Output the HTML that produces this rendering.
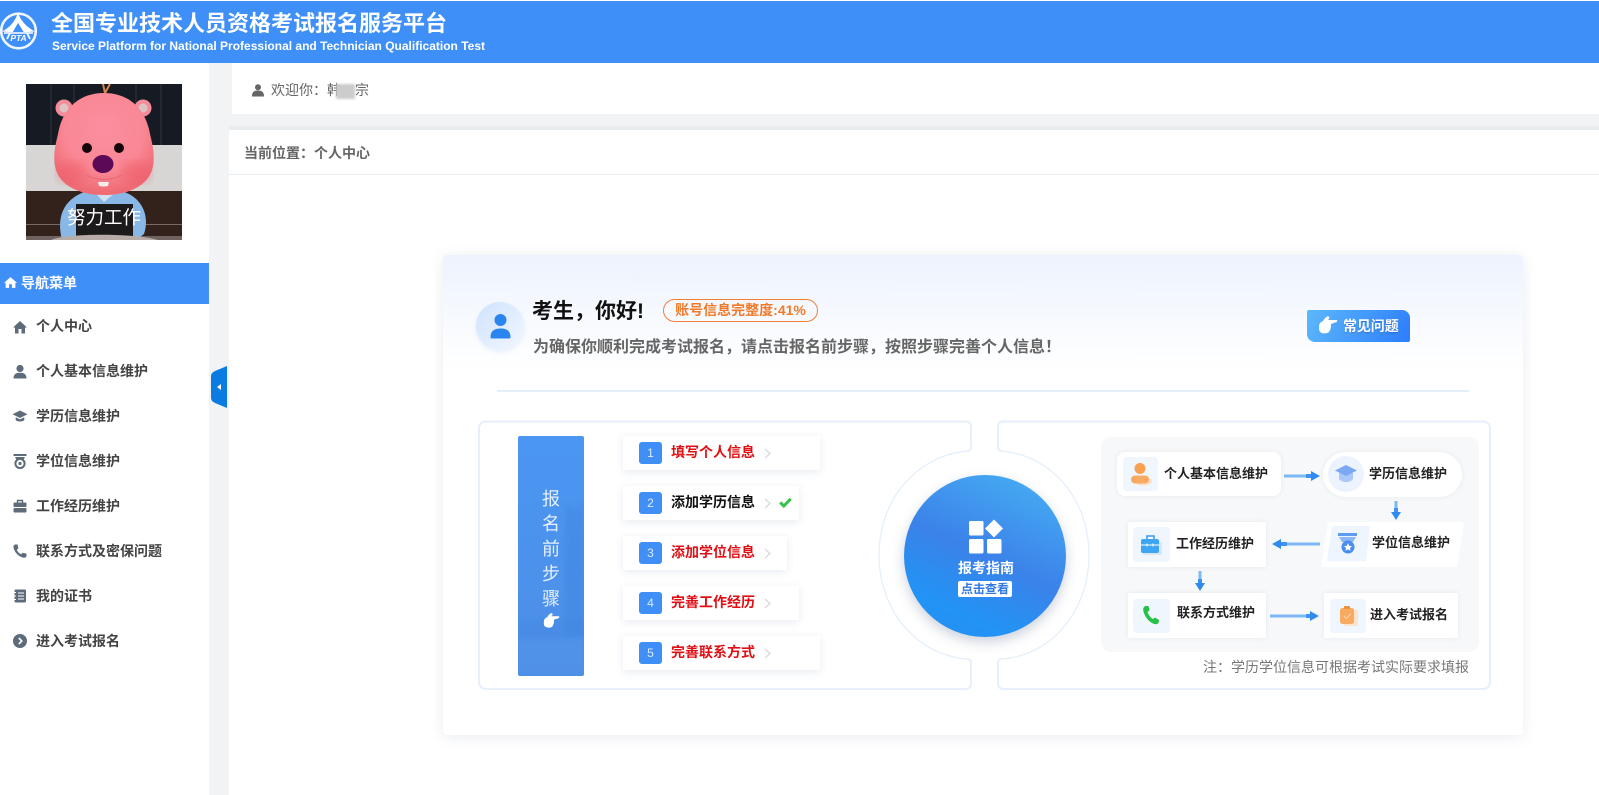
<!DOCTYPE html>
<html lang="zh"><head><meta charset="utf-8"><title>全国专业技术人员资格考试报名服务平台</title>
<style>
*{box-sizing:border-box}
html,body{margin:0;padding:0;width:1599px;height:795px;overflow:hidden;background:#fff;font-family:"Liberation Sans","Noto Sans CJK SC",sans-serif}
.a{position:absolute;white-space:nowrap}
.nav{position:absolute;left:36px;font-size:14px;font-weight:700;color:#444;line-height:20px;white-space:nowrap}
.ni{position:absolute;left:12px;width:16px;height:16px}
.step{position:absolute;left:623px;height:34px;background:#fff;box-shadow:0 2px 8px rgba(60,90,140,.12)}
.num{position:absolute;left:16px;top:6px;width:23px;height:22px;background:#3f8ff6;border-radius:3px;color:#dcebff;font-size:12px;text-align:center;line-height:22px}
.st{position:absolute;left:48px;top:0;line-height:33px;font-size:14px;font-weight:700;color:#e00f14;white-space:nowrap}
.chev{position:absolute;left:141px;top:12px;width:7px;height:11px}
.box{position:absolute;background:#fff;box-shadow:0 0 5px rgba(80,100,130,.1)}
.ib{position:absolute;background:#f0f6fe;border-radius:4px}
.bt{position:absolute;font-size:13px;font-weight:700;color:#222;line-height:18px;white-space:nowrap}
</style></head><body>
<div class="a" style="left:0;top:1px;width:1599px;height:62px;background:#3f8ff8"></div>
<svg class="a" style="left:0;top:8px" width="42" height="46" viewBox="0 0 42 46">
<circle cx="18.5" cy="23" r="17.3" fill="none" stroke="#fff" stroke-width="2.6" opacity=".92"/>
<path d="M18 4 C16.5 11 11 19 2 23.5 L9 24 L14 24 L18 15 L22.5 24 L28 24 L35 23.5 C26 19 19.5 11 18 4Z" fill="#fff"/>
<path d="M18 15 L12.5 24.5 H24 Z" fill="#3f8ff8"/>
<path d="M4 25 H33" stroke="#fff" stroke-width="1.6"/>
<path d="M10 25 L7 31 M27 25 L30 31" stroke="#fff" stroke-width="1.8"/>
<text x="18.5" y="33" font-family="Liberation Sans" font-size="8.5" font-style="italic" font-weight="700" fill="#fff" text-anchor="middle">PTA</text>
</svg>
<div class="a" style="left:51px;top:9px;font-size:22px;font-weight:700;color:#fff;line-height:30px">全国专业技术人员资格考试报名服务平台</div>
<div class="a" style="left:52px;top:39px;font-size:12px;font-weight:700;color:#fff;line-height:15px">Service Platform for National Professional and Technician Qualification Test</div>

<div class="a" style="left:209px;top:63px;width:20px;height:732px;background:#f2f3f5"></div>
<div class="a" style="left:229px;top:114px;width:1370px;height:12px;background:#f2f3f5"></div>
<div class="a" style="left:229px;top:63px;width:3px;height:51px;background:#f2f3f5"></div>
<div class="a" style="left:229px;top:126px;width:1370px;height:4px;background:#e8ecef"></div>
<div class="a" style="left:229px;top:174px;width:1370px;height:1px;background:#e8edf2"></div>

<svg class="a" style="left:252px;top:84px" width="12" height="13" viewBox="0 0 12 13"><circle cx="6" cy="3.3" r="3" fill="#666"/><path d="M0 12.5 C0 8 2 6.5 6 6.5 C10 6.5 12 8 12 12.5Z" fill="#666"/></svg>
<div class="a" style="left:271px;top:80px;font-size:14px;color:#666;line-height:20px">欢迎你：<span style="position:relative">韩<span style="display:inline-block;width:14px"></span>宗<i style="position:absolute;left:9px;top:2px;width:19px;height:15px;background:#ccc;filter:blur(1px)"></i></span></div>
<div class="a" style="left:244px;top:143px;font-size:14px;font-weight:700;color:#666;line-height:20px">当前位置：个人中心</div>

<!-- avatar -->
<svg class="a" style="left:26px;top:84px" width="156" height="156" viewBox="0 0 156 156">
<defs><radialGradient id="face" cx=".5" cy=".36" r=".62"><stop offset="0" stop-color="#fb8e9f"/><stop offset=".65" stop-color="#fa8794"/><stop offset="1" stop-color="#ee6b74"/></radialGradient><filter id="bl"><feGaussianBlur stdDeviation="5"/></filter></defs>
<rect width="156" height="61" fill="#161a22"/><path d="M25 0V61M48 0V61M110 0V61M135 0V61" stroke="#23272f" stroke-width="2"/><rect y="61" width="156" height="46" fill="#d8d5d5"/><rect y="107" width="156" height="49" fill="#33211c"/><rect y="140" width="156" height="1" fill="#7a6a66"/><rect y="152" width="156" height="4" fill="#6f6360"/>
<path d="M77 0 L79 9 M84 0 L79 9" stroke="#d5854e" stroke-width="2"/>
<path d="M36 156 C30 132 38 116 58 108 L98 108 C116 114 124 132 118 150 L110 156Z" fill="#8ab8e6"/>
<path d="M68 108 L78 118 L90 108Z" fill="#cfe0f2"/>
<rect x="50" y="120" width="57" height="33" fill="#1c1a1b"/><path d="M25 156 C40 149 110 149 132 156Z" fill="#b8aca8"/>
<circle cx="38" cy="24" r="8.5" fill="#f58c9b"/><circle cx="38" cy="24" r="4.5" fill="#dcc4c4"/><circle cx="117" cy="24" r="8.5" fill="#f58c9b"/><circle cx="117" cy="24" r="4.5" fill="#dcc4c4"/>
<path d="M78 9 C52 9 36 26 32 50 C28 66 27 76 30 86 C35 102 54 111 78 111 C102 111 121 102 126 86 C129 76 128 66 124 50 C120 26 104 9 78 9Z" fill="url(#face)"/>
<ellipse cx="46" cy="88" rx="15" ry="11" fill="#ee5a68" opacity=".45" filter="url(#bl)"/><ellipse cx="110" cy="88" rx="15" ry="11" fill="#ee5a68" opacity=".45" filter="url(#bl)"/>
<circle cx="61" cy="64" r="5" fill="#16060a"/><circle cx="93" cy="64" r="5" fill="#16060a"/>
<ellipse cx="77" cy="80" rx="10.5" ry="9" fill="#5c0a58"/>
<path d="M60 91 Q78 100 96 91" fill="none" stroke="#e86a74" stroke-width="1"/>
<path d="M72 98 H83 L82 102 Q78 103 73 102Z" fill="#f2ede8"/>
<text x="78" y="140" font-size="18.5" fill="#fff" text-anchor="middle" font-family="Liberation Sans,Noto Sans CJK SC,sans-serif">努力工作</text>
</svg>

<!-- nav -->
<div class="a" style="left:0;top:263px;width:209px;height:41px;background:#3f8ff8"></div>
<svg class="a" style="left:4px;top:276px" width="13" height="13" viewBox="0 0 12 12"><path d="M6 1 L12 6.3 L10.5 6.3 V11 H7.3 V7.6 H4.7 V11 H1.5 V6.3 H0Z" fill="#fff"/></svg>
<div class="a" style="left:21px;top:273px;font-size:14px;font-weight:700;color:#fff;line-height:20px">导航菜单</div>

<svg class="ni" style="top:319px" viewBox="0 0 16 16"><path d="M8 2 L15 8.5 H13 V14.5 H9.5 V10 H6.5 V14.5 H3 V8.5 H1Z" fill="#5e6b7a"/></svg>
<div class="nav" style="top:316px">个人中心</div>
<svg class="ni" style="top:364px" viewBox="0 0 16 16"><circle cx="8" cy="4.5" r="3.6" fill="#5e6b7a"/><path d="M1.5 14.5 C1.5 10 4 8.7 8 8.7 C12 8.7 14.5 10 14.5 14.5Z" fill="#5e6b7a"/></svg>
<div class="nav" style="top:361px">个人基本信息维护</div>
<svg class="ni" style="top:408px" viewBox="0 0 16 16"><path d="M8 2.5 L15.5 6.3 L8 10 L.5 6.3Z" fill="#5e6b7a"/><path d="M3.7 9.3 L8 11.4 L12.3 9.3 V12 C11 14 5 14 3.7 12Z" fill="#5e6b7a"/></svg>
<div class="nav" style="top:406px">学历信息维护</div>
<svg class="ni" style="top:453px" viewBox="0 0 16 16"><rect x="1.5" y="1" width="13" height="2" fill="#5e6b7a"/><path d="M3 4 H13 L11.5 7 H4.5Z" fill="#5e6b7a"/><circle cx="8" cy="10.5" r="4.6" fill="none" stroke="#5e6b7a" stroke-width="2"/><circle cx="8" cy="10.5" r="1.6" fill="#5e6b7a"/></svg>
<div class="nav" style="top:451px">学位信息维护</div>
<svg class="ni" style="top:498px" viewBox="0 0 16 16"><rect x="1.5" y="4.5" width="13" height="4.5" rx="1" fill="#5e6b7a"/><rect x="1.5" y="10" width="13" height="4.5" rx="1" fill="#5e6b7a"/><path d="M5.5 4.5 V2.5 H10.5 V4.5" fill="none" stroke="#5e6b7a" stroke-width="1.4"/></svg>
<div class="nav" style="top:496px">工作经历维护</div>
<svg class="ni" style="top:543px" viewBox="0 0 16 16"><path d="M3 1.5 L5.6 1.5 L6.3 5.5 L4.8 6.7 C5.7 9 7.3 10.4 9.4 11.3 L10.6 9.7 L14.5 10.6 L14.5 13.2 C14 14.5 12.5 15 11 14.6 C6.5 13.5 2.4 9.2 1.5 4.5 C1.3 3 1.9 1.9 3 1.5Z" fill="#5e6b7a"/></svg>
<div class="nav" style="top:541px">联系方式及密保问题</div>
<svg class="ni" style="top:588px" viewBox="0 0 16 16"><rect x="2.5" y="1.5" width="11.5" height="13" rx="1.2" fill="#5e6b7a"/><path d="M1.2 4.5 H4 M1.2 8 H4 M1.2 11.5 H4 M6 5 H12 M6 8 H12 M6 11 H12" stroke="#fff" stroke-width="1"/></svg>
<div class="nav" style="top:586px">我的证书</div>
<svg class="ni" style="top:633px" viewBox="0 0 16 16"><circle cx="8" cy="8" r="7" fill="#5e6b7a"/><path d="M6.8 5 L9.8 8 L6.8 11" fill="none" stroke="#fff" stroke-width="1.6"/></svg>
<div class="nav" style="top:631px">进入考试报名</div>

<svg class="a" style="left:211px;top:366px" width="16" height="42" viewBox="0 0 16 42"><path d="M16 0 V42 L4 37 Q0 35 0 32 V10 Q0 7 4 5Z" fill="#0a7be0"/><path d="M10 18 V24 L6 21Z" fill="#fff"/></svg>

<!-- card -->
<div class="a" style="left:443px;top:255px;width:1080px;height:480px;border-radius:4px;background:linear-gradient(#edf3fd 0,#fff 115px);box-shadow:0 2px 14px rgba(80,100,130,.12)"></div>
<div class="a" style="left:476px;top:302px;width:48px;height:48px;border-radius:50%;background:linear-gradient(135deg,#cfe2fd,#f2f7fe);box-shadow:0 2px 5px rgba(90,140,220,.12)"></div>
<svg class="a" style="left:490px;top:313px" width="21" height="26" viewBox="0 0 21 26"><circle cx="10.5" cy="7" r="6" fill="#2a86ee"/><path d="M.5 24.5 C.5 18 4 15.5 10.5 15.5 C17 15.5 20.5 18 20.5 24.5 Q20.5 25.5 18 25.5 H3 Q.5 25.5 .5 24.5Z" fill="#2a86ee"/></svg>
<div class="a" style="left:532px;top:297px;font-size:21px;font-weight:700;color:#111;line-height:30px">考生，你好!</div>
<div class="a" style="left:663px;top:299px;width:155px;height:23px;border:1px solid #f0813a;border-radius:12px;color:#f07a2a;font-size:14px;font-weight:700;line-height:21px;text-align:center">账号信息完整度:41%</div>
<div class="a" style="left:533px;top:336px;font-size:16px;font-weight:700;color:#666;line-height:24px">为确保你顺利完成考试报名，请点击报名前步骤，按照步骤完善个人信息！</div>
<div class="a" style="left:1307px;top:310px;width:103px;height:32px;border-radius:2px 8px 2px 8px;background:linear-gradient(115deg,#5cb8fb,#2d7dfb)"></div>
<svg class="a" style="left:1318px;top:315px" width="20" height="20" viewBox="0 0 20 20"><path d="M1 12 C1 8 3 7 5 6 C6 4 8 2 10 1 L11.5 2.5 C11 4 10.5 4.5 10 5 L19 5 C19.5 6 19 7 18 7.3 L13 9 C13 12 13 14 11 17 C9 19 3 19 1.5 16 C1 15 1 13 1 12Z" fill="#fff"/></svg>
<div class="a" style="left:1343px;top:316px;font-size:14px;font-weight:700;color:#fff;line-height:20px;text-shadow:0 1px 1px rgba(20,60,140,.4);letter-spacing:-.1px">常见问题</div>
<div class="a" style="left:497px;top:390px;width:972px;height:2px;background:#e3eefb"></div>

<svg class="a" style="left:0;top:0" width="1599" height="795" viewBox="0 0 1599 795">
<path d="M487 421.5 H965 Q971 421.5 971 427 V447 Q971 451 967 451 C916 456 879 500 879 555 C879 610 916 655 967 659 Q971 659 971 663 V683 Q971 689 965 689 H487 Q479 689 479 681 V429 Q479 421.5 487 421.5Z" fill="#fff"/>
<path d="M1004 421.5 H1482 Q1490 421.5 1490 429 V681 Q1490 689 1482 689 H1004 Q998 689 998 683 V663 Q998 659 1002 659 C1053 655 1089 610 1089 555 C1089 500 1053 456 1002 451 Q998 451 998 447 V427 Q998 421.5 1004 421.5Z" fill="#fff"/>
<path d="M967 451 Q971 451 971 447 V427 Q971 421.5 965 421.5 H487 Q479 421.5 479 429 V681 Q479 689 487 689 H965 Q971 689 971 683 V663 Q971 659 967 659 M1002 451 Q998 451 998 447 V427 Q998 421.5 1004 421.5 H1482 Q1490 421.5 1490 429 V681 Q1490 689 1482 689 H1004 Q998 689 998 683 V663 Q998 659 1002 659" fill="none" stroke="#e6effb" stroke-width="2"/>
<path d="M967 451 C916 456 879 500 879 555 C879 610 916 655 967 659 M1002 451 C1053 456 1089 500 1089 555 C1089 610 1053 655 1002 659" fill="none" stroke="#e3eefb" stroke-width="1.2"/>
</svg>

<!-- step column -->
<svg class="a" style="left:518px;top:436px" width="66" height="240" viewBox="0 0 66 240">
<defs><linearGradient id="col" x1="0" y1="0" x2="0" y2="1"><stop offset="0" stop-color="#4b96f2"/><stop offset="1" stop-color="#4c8ee6"/></linearGradient><filter id="bs"><feGaussianBlur stdDeviation="2"/></filter></defs>
<rect width="66" height="240" rx="2" fill="url(#col)"/><path d="M47 68 L62 74 V66 H66 V200 H47Z" fill="#3e83de" opacity=".35" filter="url(#bs)"/><path d="M0 184 L20 182 L66 184 V201 H0Z" fill="#4285e0" opacity=".3" filter="url(#bs)"/><rect y="204" width="66" height="34" fill="#5f9dec" opacity=".22" filter="url(#bs)"/>
</svg>
<div class="a" style="left:518px;top:487px;width:66px;text-align:center;font-size:18px;line-height:25px;color:#e6f0ff;white-space:normal">报<br>名<br>前<br>步<br>骤</div>
<svg class="a" style="left:543px;top:612px" width="17" height="17" viewBox="0 0 20 20"><path d="M1 12 C1 8 3 7 5 6 C6 4 8 2 10 1 L11.5 2.5 C11 4 10.5 4.5 10 5 L19 5 C19.5 6 19 7 18 7.3 L13 9 C13 12 13 14 11 17 C9 19 3 19 1.5 16 C1 15 1 13 1 12Z" fill="#fff"/></svg>

<div class="step" style="top:436px;width:197px"><div class="num">1</div><div class="st">填写个人信息</div><svg class="chev" viewBox="0 0 7 11"><path d="M1 1 L6 5.5 L1 10" fill="none" stroke="#d8d8d8" stroke-width="1.2"/></svg></div>
<div class="step" style="top:486px;width:176px"><div class="num">2</div><div class="st" style="color:#111">添加学历信息</div><svg class="chev" viewBox="0 0 7 11"><path d="M1 1 L6 5.5 L1 10" fill="none" stroke="#d8d8d8" stroke-width="1.2"/></svg><svg style="position:absolute;left:156px;top:11px" width="13" height="11" viewBox="0 0 13 11"><path d="M1.2 5.5 L4.8 9 L11.8 1.8" fill="none" stroke="#38c24a" stroke-width="3"/></svg></div>
<div class="step" style="top:536px;width:164px"><div class="num">3</div><div class="st">添加学位信息</div><svg class="chev" viewBox="0 0 7 11"><path d="M1 1 L6 5.5 L1 10" fill="none" stroke="#d8d8d8" stroke-width="1.2"/></svg></div>
<div class="step" style="top:586px;width:176px"><div class="num">4</div><div class="st">完善工作经历</div><svg class="chev" viewBox="0 0 7 11"><path d="M1 1 L6 5.5 L1 10" fill="none" stroke="#d8d8d8" stroke-width="1.2"/></svg></div>
<div class="step" style="top:636px;width:197px"><div class="num">5</div><div class="st">完善联系方式</div><svg class="chev" viewBox="0 0 7 11"><path d="M1 1 L6 5.5 L1 10" fill="none" stroke="#d8d8d8" stroke-width="1.2"/></svg></div>

<!-- big circle -->
<div class="a" style="left:904px;top:475px;width:162px;height:162px;border-radius:50%;background:linear-gradient(205deg,#46abf3 8%,#3b82e9 50%,#2194f5 80%,#2a8af2 100%);box-shadow:0 5px 12px rgba(50,70,110,.25)"></div>
<svg class="a" style="left:968px;top:519px" width="36" height="36" viewBox="0 0 36 36"><rect x="1" y="2" width="14.5" height="14.5" rx="1.5" fill="#fff"/><rect x="1" y="20" width="14.5" height="14.5" rx="1.5" fill="#fff"/><rect x="19" y="20" width="14.5" height="14.5" rx="1.5" fill="#fff"/><path d="M26 .5 L35 9.5 L26 18.5 L17 9.5Z" fill="#fff"/></svg>
<div class="a" style="left:955px;top:558px;width:62px;text-align:center;font-size:14px;font-weight:700;color:#fff;line-height:20px">报考指南</div>
<div class="a" style="left:958px;top:581px;width:54px;height:16px;background:#fff;border-radius:2px;text-align:center;font-size:12px;font-weight:700;color:#2f78e2;line-height:16px">点击查看</div>

<!-- flow -->
<div class="a" style="left:1101px;top:437px;width:378px;height:215px;background:#f7f8fa;border-radius:10px"></div>

<div class="box" style="left:1117px;top:452px;width:164px;height:44px;border-radius:8px"></div>
<div class="ib" style="left:1123px;top:457px;width:35px;height:34px"></div>
<svg class="a" style="left:1129px;top:462px" width="24" height="24" viewBox="0 0 24 24"><ellipse cx="14" cy="19" rx="9" ry="4.5" fill="#fadfc8"/><circle cx="11" cy="6.5" r="5.5" fill="#f7a050"/><rect x="2" y="13.5" width="18" height="8" rx="4" fill="#f8a962"/></svg>
<div class="bt" style="left:1164px;top:465px">个人基本信息维护</div>

<div class="box" style="left:1323px;top:452px;width:139px;height:45px;border-radius:23px"></div>
<div class="a" style="left:1328px;top:456px;width:36px;height:36px;border-radius:50%;background:#edf3fe"></div>
<svg class="a" style="left:1335px;top:464px" width="22" height="20" viewBox="0 0 22 20"><path d="M4 9 H18 V15 C15 19 7 19 4 15Z" fill="#a9c7f7"/><path d="M11 1 L22 6.5 L11 12 L0 6.5Z" fill="#7ba8f0"/></svg>
<div class="bt" style="left:1369px;top:465px">学历信息维护</div>

<svg class="a" style="left:1316px;top:520px" width="152" height="50" viewBox="0 0 152 50"><path d="M12 2 H148 L141 47 H5Z" fill="#fff"/><path d="M16 6 H54 L50 41 H11Z" fill="#eef5fe"/><rect x="22" y="13" width="19" height="3" fill="#5f9bf0"/><path d="M23 17 H40 L37 22 H26Z" fill="#8ab7f5"/><circle cx="32" cy="27" r="6.5" fill="#4a8df0"/><path d="M32 23 L33.2 25.8 L36 26.1 L34 28 L34.5 30.8 L32 29.4 L29.5 30.8 L30 28 L28 26.1 L30.8 25.8Z" fill="#fff"/></svg>
<div class="bt" style="left:1372px;top:534px">学位信息维护</div>

<div class="box" style="left:1128px;top:522px;width:138px;height:45px"></div>
<div class="ib" style="left:1133px;top:527px;width:37px;height:35px"></div>
<svg class="a" style="left:1140px;top:534px" width="22" height="22" viewBox="0 0 22 22"><path d="M7 5 V2 H14 V5" fill="none" stroke="#3d9cf0" stroke-width="1.6"/><rect x="3" y="8" width="19" height="13" fill="#d6e8fb"/><rect x="1" y="5" width="18" height="14" rx="2" fill="#3da5f2"/><path d="M1 11 H19 M7 9.5 V12.5 M13 9.5 V12.5" stroke="#fff" stroke-width="1"/></svg>
<div class="bt" style="left:1176px;top:535px">工作经历维护</div>

<div class="box" style="left:1128px;top:593px;width:138px;height:45px"></div>
<div class="ib" style="left:1133px;top:599px;width:37px;height:34px"></div>
<svg class="a" style="left:1142px;top:605px" width="18" height="20" viewBox="0 0 18 20"><path d="M3.5 1 L6.5 1 L7.5 5.5 L5.5 7 C6.5 10 8.5 12.5 11 14 L13 12.5 L17 15 L16.5 18 C15 19.8 12.5 19.5 10 18 C5.5 15.5 1.8 10 1.2 5 C1 3 2 1.5 3.5 1Z" fill="#27c14a"/></svg>
<div class="bt" style="left:1177px;top:604px">联系方式维护</div>

<div class="box" style="left:1324px;top:593px;width:134px;height:45px"></div>
<div class="ib" style="left:1330px;top:599px;width:36px;height:34px"></div>
<svg class="a" style="left:1338px;top:606px" width="20" height="20" viewBox="0 0 20 20"><rect x="6" y="4" width="14" height="16" fill="#fbe3cf"/><rect x="2" y="2" width="14" height="16" rx="2.5" fill="#f7ab62"/><rect x="6" y="0" width="6" height="3" rx="1" fill="#f08f3a"/><path d="M6 10 L8.5 12.5 L12.5 8" fill="none" stroke="#fbd2ab" stroke-width="1"/></svg>
<div class="bt" style="left:1370px;top:606px">进入考试报名</div>

<svg class="a" style="left:0;top:0" width="1599" height="795" viewBox="0 0 1599 795">
<g stroke="#7cb8f3" stroke-width="3" fill="none"><path d="M1284 476 H1310"/><path d="M1396 501 V512"/><path d="M1320 544 H1282"/><path d="M1200 571 V583"/><path d="M1270 616 H1310"/></g>
<g stroke="#3f93ee" stroke-width="4" fill="none"><path d="M1306 476 H1312"/><path d="M1396 508 V513"/><path d="M1281 544 H1287"/><path d="M1200 579 V584"/><path d="M1306 616 H1312"/></g>
<g fill="#2f8bee"><path d="M1311 471 L1320 476 L1311 481Z"/><path d="M1391 512 H1401 L1396 520Z"/><path d="M1281 539 L1272 544 L1281 549Z"/><path d="M1195 583 H1205 L1200 591Z"/><path d="M1310 611 L1319 616 L1310 621Z"/></g>
</svg>
<div class="a" style="left:1203px;top:657px;font-size:14px;color:#777;line-height:20px">注：学历学位信息可根据考试实际要求填报</div>
</body></html>
